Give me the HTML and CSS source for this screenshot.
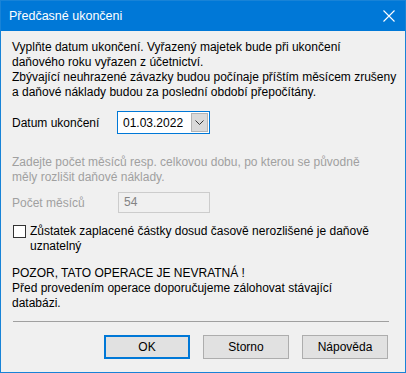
FILE: index.html
```html
<!DOCTYPE html>
<html>
<head>
<title>Předčasné ukončeni</title>
<link rel="stylesheet" href="styles.css">
</head>
<body>
<div class="window">
  <div class="titlebar">
    <span class="title">Předčasné ukončeni</span>
    <svg class="close" width="12" height="12" viewBox="0 0 12 12">
      <path d="M0.5 0.5 L11.5 11.5 M11.5 0.5 L0.5 11.5" stroke="#fff" stroke-width="1.1" fill="none"/>
    </svg>
  </div>
  <div class="content">
    <p class="text">Vyplňte datum ukončení. Vyřazený majetek bude při ukončení<br>daňového roku vyřazen z účetnictví.<br>Zbývající neuhrazené závazky budou počínaje příštím měsícem zrušeny<br>a daňové náklady budou za poslední období přepočítány.</p>

    <div class="row date-row">
      <span class="label">Datum ukončení</span>
      <div class="datebox">
        <span class="datevalue">01.03.2022</span>
        <span class="dropbtn">
          <svg width="9" height="5" viewBox="0 0 9 5"><path d="M0.5 0.5 L4.5 4.5 L8.5 0.5" stroke="#333" stroke-width="1" fill="none"/></svg>
        </span>
      </div>
    </div>

    <p class="text hint">Zadejte počet měsíců resp. celkovou dobu, po kterou se původně<br>měly rozlišit daňové náklady.</p>

    <div class="row count-row">
      <span class="label disabled">Počet měsíců</span>
      <div class="countbox">54</div>
    </div>

    <div class="check-row">
      <span class="checkbox"></span>
      <span class="text">Zůstatek zaplacené částky dosud časově nerozlišené je daňově<br>uznatelný</span>
    </div>

    <p class="text warning">POZOR, TATO OPERACE JE NEVRATNÁ !<br>Před provedením operace doporučujeme zálohovat stávající<br>databázi.</p>

    <div class="separator"></div>

    <div class="buttons">
      <button class="btn default">OK</button>
      <button class="btn">Storno</button>
      <button class="btn">Nápověda</button>
    </div>
  </div>
</div>
</body>
</html>
```

FILE: styles.css
```css
body {
    margin: 0;
    padding: 0;
    font-family: "Liberation Sans", Arial, sans-serif;
    font-size: 12px;
    color: #000;
}

.window {
    width: 406px;
    height: 373px;
    box-sizing: border-box;
    border: 1px solid #1883d7;
    background: #f0f0f0;
    display: flex;
    flex-direction: column;
}

.titlebar {
    height: 30px;
    background: #0078d7;
    color: #fff;
    display: flex;
    align-items: center;
    justify-content: space-between;
    padding: 0 10px 0 8px;
    flex-shrink: 0;
}

.title {
    font-size: 12.5px;
    margin-top: -1px;
}

.close {
    margin-top: -1px;
}

.content {
    padding: 9px 11px 0 11px;
}

.text {
    margin: 0;
    line-height: 15px;
    white-space: nowrap;
}

.row {
    display: flex;
    align-items: center;
}

.date-row {
    margin-top: 11px;
}

.label {
    width: 105px;
}

.disabled,
.hint {
    color: #a0a0a0;
}

.datebox {
    width: 93px;
    height: 23px;
    box-sizing: border-box;
    border: 1px solid #0078d7;
    background: #fff;
    display: flex;
    align-items: center;
    justify-content: space-between;
    padding: 0 1px 0 5px;
}

.dropbtn {
    width: 17px;
    height: 19px;
    box-sizing: border-box;
    border: 1px solid #b4b4b4;
    background: #dadada;
    display: flex;
    align-items: center;
    justify-content: center;
}

.hint {
    margin-top: 21px;
}

.count-row {
    margin-top: 7px;
}

.countbox {
    width: 92px;
    height: 21px;
    box-sizing: border-box;
    border: 1px solid #cccccc;
    padding: 2px 0 0 5px;
    color: #838383;
    margin-left: 1px;
}

.check-row {
    display: flex;
    align-items: flex-start;
    margin-top: 11px;
}

.checkbox {
    width: 13px;
    height: 13px;
    box-sizing: border-box;
    border: 1px solid #333;
    background: #fff;
    flex-shrink: 0;
    margin: 1px 4px 0 1px;
}

.warning {
    margin-top: 12px;
}

.separator {
    height: 1px;
    background: #a0a0a0;
    margin: 10px 5px 0 1px;
}

.buttons {
    display: flex;
    justify-content: flex-end;
    gap: 13px;
    margin: 13px 6px 0 0;
}

.btn {
    width: 86px;
    height: 24px;
    box-sizing: border-box;
    border: 1px solid #adadad;
    background: #e1e1e1;
    font-family: "Liberation Sans", Arial, sans-serif;
    font-size: 12px;
    color: #000;
    padding: 0;
}

.btn.default {
    border: 2px solid #0078d7;
}
```
